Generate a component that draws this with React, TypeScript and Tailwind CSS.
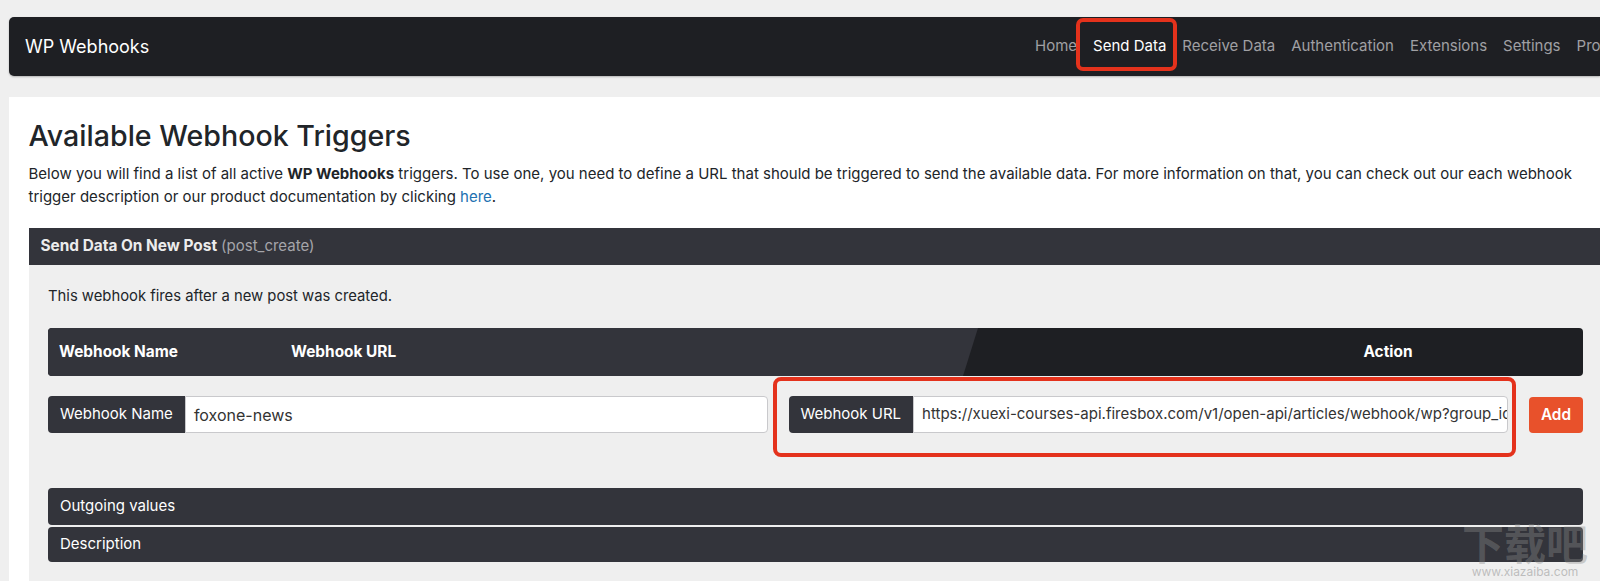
import React from 'react';

const font = { fontFamily: 'Inter, "Noto Sans", "Liberation Sans", sans-serif' };

const navItems = ['Home', 'Send Data', 'Receive Data', 'Authentication', 'Extensions', 'Settings', 'Pro Features'];

function Navbar() {
  return (
    <div className="flex items-center h-[59px] bg-[#1e1f23] rounded-l-[5px] pl-[16px] overflow-hidden whitespace-nowrap shadow-[0_1px_2px_rgba(0,0,0,0.25)]">
      <div className="w-[1002px] shrink-0 text-[18px] text-white">WP Webhooks</div>
      <div className="flex items-center -mt-[4px] pt-[18px] pb-[16px]">
        {navItems.map((item) => (
          <div key={item} className="relative shrink-0 px-[8px] leading-[20px]">
            <span className={`text-[15px] ${item === 'Send Data' ? 'text-white' : 'text-[#a0a0a4]'}`}>{item}</span>
            {item === 'Send Data' && (
              <span className="absolute -left-[9px] -right-[3px] -top-[17px] -bottom-[15px] border-[4px] border-[#e4321c] rounded-[7px]" />
            )}
          </div>
        ))}
      </div>
    </div>
  );
}

function TableHeader() {
  return (
    <div className="relative h-[48px] rounded-[4px] bg-[#1e1f23] overflow-hidden">
      {/* lighter slanted section on the left */}
      <div className="absolute inset-0 bg-[#33343b] [clip-path:polygon(0_0,930px_0,915px_100%,0_100%)]" />
      <div className="relative flex items-center h-full text-[15.4px] font-bold text-white">
        <div className="w-[243px] pl-[11px]">Webhook Name</div>
        <div className="flex-1">Webhook URL</div>
        <div className="w-[390px] text-center">Action</div>
      </div>
    </div>
  );
}

function InputGroup({
  label,
  value,
  valueSize,
  highlight,
}: {
  label: string;
  value: string;
  valueSize: string;
  highlight?: boolean;
}) {
  return (
    <div className="relative flex-1 min-w-0 flex h-[37px]">
      <div className="flex items-center px-[12px] bg-[#33343b] text-white text-[15px] rounded-l-[4px] whitespace-nowrap">
        {label}
      </div>
      <div className="flex-1 min-w-0 flex items-center bg-white border border-[#c9c9cc] rounded-r-[4px] px-[8px] overflow-hidden">
        <span className={`${valueSize} text-[#333] whitespace-nowrap`}>{value}</span>
      </div>
      {highlight && (
        <span className="absolute -left-[16px] -right-[8px] -top-[19px] -bottom-[24px] border-[4px] border-[#e4321c] rounded-[8px]" />
      )}
    </div>
  );
}

function Bar({ children, h }: { children: React.ReactNode; h: string }) {
  return (
    <div className={`flex items-center ${h} bg-[#33343b] rounded-[4px] pl-[12px] text-white text-[15px]`}>
      {children}
    </div>
  );
}

export default function App() {
  return (
    <div className="relative w-full h-[581px] overflow-hidden bg-[#efefef]" style={font}>
      <div className="w-full pl-[9px] pt-[17px]">
        <Navbar />

        <div className="mt-[21px] bg-white pl-[19.5px] pt-[21px] pb-[40px]">
          <h1 className="text-[28.6px] leading-[36px] font-medium text-[#212529]">Available Webhook Triggers</h1>
          <p className="mt-[7.5px] w-[1556px] text-[15px] leading-[23.5px] text-[#212529]">
            Below you will find a list of all active <b>WP Webhooks</b> triggers. To use one, you need to define a URL
            that should be triggered to send the available data. For more information on that, you can check out our each
            webhook trigger description or our product documentation by clicking{' '}
            <span className="text-[#2271b1]">here</span>.
          </p>

          <div className="mt-[19px]">
            <div className="flex items-center h-[37px] bg-[#33343b] pl-[12px] text-[15.4px]">
              <span className="font-bold text-[#ececec]">Send Data On New Post</span>
              <span className="ml-[4px] text-[#a5a5aa] text-[15px]">(post_create)</span>
            </div>

            <div className="bg-[#efefef] pl-[19.5px] pt-[21.5px] pb-[40px]">
              <div className="w-[1535px]">
                <p className="text-[14.8px] leading-[20px] text-[#212529]">This webhook fires after a new post was created.</p>

                <div className="mt-[22px]">
                  <TableHeader />
                </div>

                <div className="mt-[20px] flex items-center gap-[21px]">
                  <InputGroup label="Webhook Name" value="foxone-news" valueSize="text-[16px]" />
                  <InputGroup
                    label="Webhook URL"
                    value="https://xuexi-courses-api.firesbox.com/v1/open-api/articles/webhook/wp?group_id=1"
                    valueSize="text-[15px]"
                    highlight
                  />
                  <button className="w-[54px] h-[36px] shrink-0 rounded-[4px] bg-[#e8512b] text-white text-[15.4px] font-semibold">
                    Add
                  </button>
                </div>

                <div className="mt-[55px] flex flex-col gap-[2px]">
                  <Bar h="h-[37px]">Outgoing values</Bar>
                  <Bar h="h-[35px]">Description</Bar>
                </div>
              </div>
            </div>
          </div>
        </div>
      </div>

      {/* watermark */}
      <div className="absolute left-[1462px] top-[519px] flex flex-col items-center pointer-events-none select-none">
        <span className="text-[42px] leading-[46px] font-bold text-[#8a8a8a]/40" style={{ fontFamily: '"Noto Sans CJK SC", sans-serif' }}>
          下载吧
        </span>
        <span className="text-[12px] leading-[13px] text-[#8a8a8a]/50">www.xiazaiba.com</span>
      </div>
    </div>
  );
}
